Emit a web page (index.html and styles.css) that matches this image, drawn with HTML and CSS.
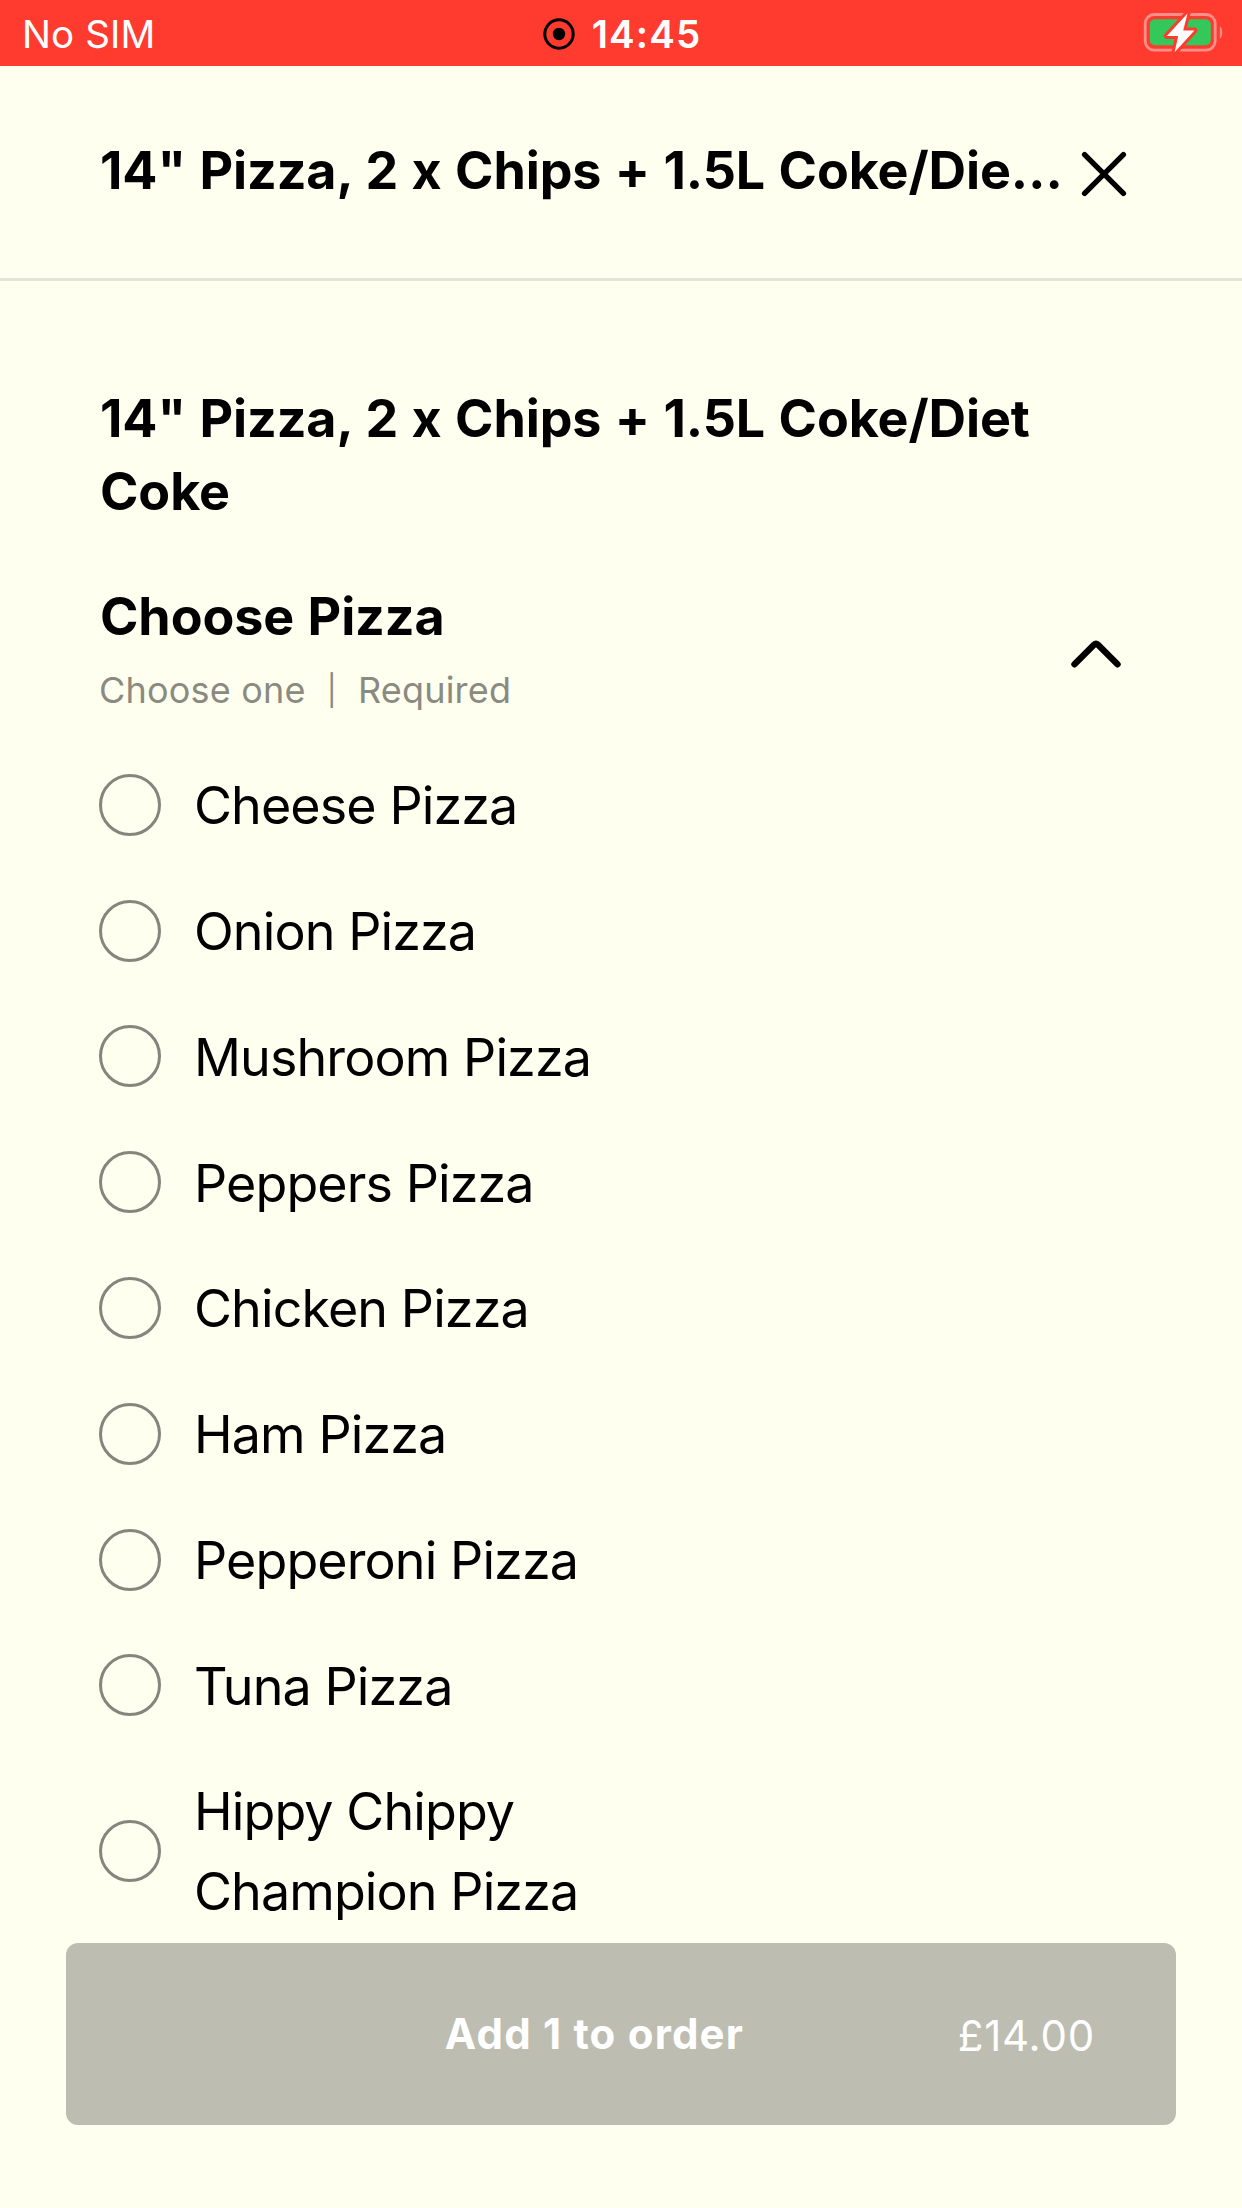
FILE: index.html
```html
<!DOCTYPE html>
<html lang="en">
<head>
<meta charset="UTF-8">
<meta name="viewport" content="width=device-width, initial-scale=1.0">
<title>Choose Pizza</title>
<link rel="stylesheet" href="styles.css">
</head>
<body>
<div class="status-bar">
<div class="carrier">No SIM</div>
<div class="clock">
<svg class="record-icon" width="32" height="32" viewBox="0 0 32 32">
<circle cx="16" cy="16" r="14.2" fill="none" stroke="#000" stroke-width="3"/>
<circle cx="16" cy="16" r="6.2"/>
</svg>
<span>14:45</span>
</div>
<div class="battery">
<svg width="82" height="42" viewBox="0 0 82 42">
<rect x="2.2" y="3.5" width="70" height="35.6" rx="9" fill="none" stroke="#ff8f88" stroke-width="2.8"/>
<path d="M76.8 15.2v12.4c3.2-1.6 3.2-10.8 0-12.4z" fill="#ff8f88"/>
<rect x="6.8" y="8.2" width="61" height="26" rx="5" fill="#34c759"/>
<path d="M44.5 2.5L23.8 25h11.4l-3.6 16.2L51.4 19.4H40.2z" fill="#fff" stroke="#ff3b30" stroke-width="6" stroke-linejoin="round" paint-order="stroke"/>
</svg>
</div>
</div>
<header class="header">
<div class="header-title">14" Pizza, 2 x Chips + 1.5L Coke/Die…</div>
<svg class="close-icon" width="46" height="46" viewBox="0 0 46 46">
<path d="M3.6 3.6l38.8 38.8M42.4 3.6L3.6 42.4"/>
</svg>
</header>
<main class="content">
<h1>14" Pizza, 2 x Chips + 1.5L Coke/Diet Coke</h1>
<div class="group-header">
<div>
<h2>Choose Pizza</h2>
<div class="hint"><span>Choose one</span><span class="divider">|</span><span>Required</span></div>
</div>
<svg class="chevron-icon" width="52" height="30" viewBox="0 0 52 30">
<path d="M4.5 25.3L24 5.8q2-2 4 0L47.5 25.3"/>
</svg>
</div>
<form class="options">
<label class="option"><input type="radio" name="pizza"><span>Cheese Pizza</span></label>
<label class="option"><input type="radio" name="pizza"><span>Onion Pizza</span></label>
<label class="option"><input type="radio" name="pizza"><span>Mushroom Pizza</span></label>
<label class="option"><input type="radio" name="pizza"><span>Peppers Pizza</span></label>
<label class="option"><input type="radio" name="pizza"><span>Chicken Pizza</span></label>
<label class="option"><input type="radio" name="pizza"><span>Ham Pizza</span></label>
<label class="option"><input type="radio" name="pizza"><span>Pepperoni Pizza</span></label>
<label class="option"><input type="radio" name="pizza"><span>Tuna Pizza</span></label>
<label class="option"><input type="radio" name="pizza"><span>Hippy Chippy Champion Pizza</span></label>
</form>
</main>
<footer class="footer">
<button class="add-button">
<span class="add-label">Add 1 to order</span>
<span class="add-price">£14.00</span>
</button>
</footer>
</body>
</html>
```

FILE: styles.css
```css
* {
    box-sizing: border-box;
}

body {
    margin: 0;
    height: 2208px;
    display: flex;
    flex-direction: column;
    overflow: hidden;
    background-color: #ffffef;
    color: #000;
    font-family: Inter, "Liberation Sans", sans-serif;
}

.status-bar {
    flex: none;
    display: grid;
    grid-template-columns: 1fr auto 1fr;
    align-items: center;
    height: 66px;
    padding: 2px 17px 0 22px;
    background-color: #ff3b30;
    color: #fff;
    font-size: 38.5px;
    line-height: 46px;
}

.carrier {
    letter-spacing: 0.1px;
}

.clock {
    display: flex;
    align-items: center;
    gap: 17px;
    margin-left: -3px;
    font-weight: 600;
    letter-spacing: 1.1px;
}

.battery {
    justify-self: end;
    display: flex;
    margin-top: -4px;
}

.header {
    flex: none;
    display: flex;
    align-items: center;
    height: 215px;
    padding: 0 114px 0 100px;
    border-bottom: 3px solid #e4e4d7;
}

.header-title {
    width: 967px;
    margin-top: -4px;
    white-space: nowrap;
    font-size: 52px;
    font-weight: 700;
    line-height: 73px;
    letter-spacing: -0.1px;
    word-spacing: 1.2px;
}

.close-icon {
    flex: none;
    margin-left: 14px;
    margin-top: 4px;
    fill: none;
    stroke: #000;
    stroke-width: 5.4;
    stroke-linecap: round;
}

.content {
    flex: 1;
    min-height: 0;
    overflow: hidden;
    padding: 101px 120px 0 99px;
}

h1,
h2 {
    margin: 0 0 0 1px;
    font-size: 52px;
    font-weight: 700;
    line-height: 73px;
    letter-spacing: -0.1px;
    word-spacing: 1.2px;
}

.group-header {
    display: flex;
    align-items: center;
    justify-content: space-between;
    margin-top: 52px;
}

.hint {
    display: flex;
    gap: 22px;
    margin-top: 12px;
    color: #8a8a81;
    font-size: 36px;
    line-height: 50px;
    letter-spacing: 0.2px;
}

.divider {
    font-size: 30px;
    margin: 0 -1px;
}

.chevron-icon {
    margin-top: 13px;
    fill: none;
    stroke: #000;
    stroke-width: 6.4;
    stroke-linecap: round;
}

.options {
    margin-top: 28px;
}

.option {
    display: flex;
    align-items: center;
    gap: 33px;
    padding: 23.2px 0;
    font-size: 52px;
    line-height: 79.4px;
    letter-spacing: -0.9px;
}

.option span {
    max-width: 410px;
}

.option input {
    appearance: none;
    flex: none;
    width: 62px;
    height: 62px;
    margin: -2px 0 0;
    border: 3px solid #85857d;
    border-radius: 50%;
}

.footer {
    flex: none;
    padding: 0 66px 83px;
}

.add-button {
    display: grid;
    grid-template-columns: 1fr auto 1fr;
    align-items: center;
    width: 100%;
    height: 182px;
    padding: 0 81px 0 28px;
    border: none;
    border-radius: 12px;
    background-color: #bdbdb1;
    color: #fff;
    font-family: inherit;
    font-size: 42px;
    line-height: 50px;
}

.add-label {
    grid-column: 2;
    font-weight: 700;
    letter-spacing: 1.2px;
}

.add-price {
    justify-self: end;
    margin-top: 4px;
    letter-spacing: 0.8px;
}
```
